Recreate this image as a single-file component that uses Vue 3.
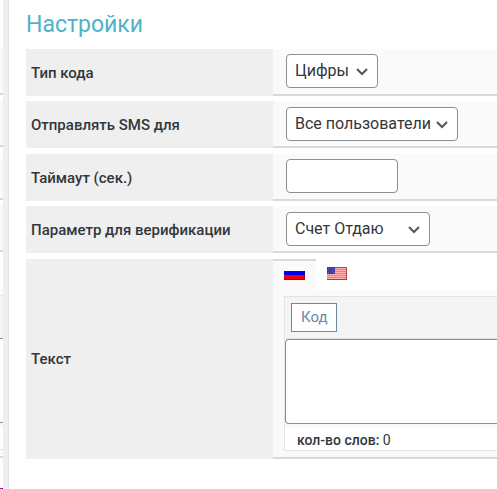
<script setup>
import { ref } from 'vue'

const codeType = ref('digits')
const audience = ref('all')
const timeout = ref('')
const param = ref('give')
const text = ref('')
const stripes = Array.from({ length: 7 }, (_, i) => i)
</script>

<template>
  <div class="page">
    <div class="previous" aria-hidden="true">
      <div v-for="n in 4" :key="n" class="previous-row"></div>
      <div class="previous-editor">
        <div class="previous-toolbar"></div>
        <div class="previous-area"></div>
        <div class="previous-count"></div>
      </div>
      <div class="previous-link"></div>
    </div>

    <main class="panel">
      <h2 class="title">Настройки</h2>
      <form class="rows" @submit.prevent>
        <div class="row">
          <label class="label" for="code-type">Тип кода</label>
          <div class="field">
            <div class="select-wrap short">
              <select id="code-type" v-model="codeType" class="control">
                <option value="digits">Цифры</option>
              </select>
              <svg class="chevron" viewBox="0 0 14 10"><path d="M2 2l5 5 5-5" /></svg>
            </div>
          </div>
        </div>
        <div class="row">
          <label class="label" for="audience">Отправлять SMS для</label>
          <div class="field">
            <div class="select-wrap long">
              <select id="audience" v-model="audience" class="control">
                <option value="all">Все пользователи</option>
              </select>
              <svg class="chevron" viewBox="0 0 14 10"><path d="M2 2l5 5 5-5" /></svg>
            </div>
          </div>
        </div>
        <div class="row">
          <label class="label" for="timeout">Таймаут (сек.)</label>
          <div class="field">
            <input id="timeout" v-model="timeout" class="control number" type="text" />
          </div>
        </div>
        <div class="row">
          <label class="label" for="param">Параметр для верификации</label>
          <div class="field">
            <div class="select-wrap medium">
              <select id="param" v-model="param" class="control">
                <option value="give">Счет Отдаю</option>
              </select>
              <svg class="chevron" viewBox="0 0 14 10"><path d="M2 2l5 5 5-5" /></svg>
            </div>
          </div>
        </div>
        <div class="row text-row">
          <label class="label" for="text">Текст</label>
          <div class="text-field">
            <div class="tabs">
              <button type="button" class="tab active" aria-label="Русский">
                <svg class="flag" width="21" height="13" viewBox="0 0 21 13" shape-rendering="crispEdges">
                  <rect width="21" height="4" fill="#fcfcfc" />
                  <rect y="4" width="21" height="4" fill="#0000f5" />
                  <rect y="8" width="21" height="5" fill="#f00000" />
                  <rect y="12" width="21" height="1" fill="#c40000" />
                  <rect x="20" y="4" width="1" height="4" fill="#0000bd" />
                  <rect x="20" y="8" width="1" height="5" fill="#b80000" />
                </svg>
              </button>
              <button type="button" class="tab" aria-label="English">
                <svg class="flag" width="20" height="13" viewBox="0 0 20 13" shape-rendering="crispEdges">
                  <rect width="20" height="13" fill="#ffb0b0" />
                  <rect v-for="i in stripes" :key="i" :y="i * 2" width="20" height="1" :fill="i === 0 || i === 6 ? '#d83238' : '#f57a7e'" />
                  <rect x="19" width="1" height="13" fill="#b8444a" />
                  <rect y="12" width="20" height="1" fill="#b83238" />
                  <rect width="8" height="7" fill="#3b3b9b" />
                  <path d="M1 1h1v1h-1zM4 1h1v1h-1zM6 2h1v1h-1zM2 3h1v1h-1zM5 4h1v1h-1zM1 5h1v1h-1zM6 5h1v1h-1z" fill="#6868b5" />
                </svg>
              </button>
            </div>
            <div class="editor-pad">
              <div class="editor">
                <div class="toolbar"><button type="button" class="code">Код</button></div>
                <textarea id="text" v-model="text" class="area"></textarea>
                <div class="count"><strong>кол-во слов:</strong> 0</div>
              </div>
            </div>
          </div>
        </div>
      </form>
    </main>
  </div>
</template>

<style>
body {
  margin: 0;
  background: #fff;
}
</style>

<style scoped>
.page {
  display: flex;
  min-height: 100vh;
  overflow: hidden;
  font-family: Roboto, "Liberation Sans", sans-serif;
  color: #32373c;
}
.page * {
  box-sizing: border-box;
}
.previous {
  flex: none;
  width: 3px;
  padding-top: 48px;
}
.previous-row {
  height: 47px;
  margin-bottom: 5px;
  background: #fafafa;
  border-bottom: 2px solid #d9d9d9;
}
.previous-row:nth-child(even) {
  margin-bottom: 6px;
}
.previous-editor {
  margin-top: 37px;
  padding-top: 6px;
  background: #fafafa;
  border-bottom: 2px solid #d9d9d9;
}
.previous-toolbar {
  height: 43px;
  background: #f4f4f4;
  border-top: 1px solid #e5e5e5;
}
.previous-area {
  height: 85px;
  background: #fff;
  border: solid #8c8f94;
  border-width: 1px 0;
}
.previous-count {
  height: 27px;
  margin-bottom: 6px;
  background: #fff;
  border-top: 4px solid #fafafa;
  border-bottom: 1px solid #e5e5e5;
}
.previous-link {
  height: 1px;
  margin-top: 30px;
  background: linear-gradient(90deg, #f00 1px, #0a0 1px 2px, #00f 2px);
}
.panel {
  flex: 1;
  min-width: 0;
  padding: 9px 0 0 17px;
  border-left: 5px solid #efefef;
  box-shadow: inset 1px 0 #e0e0e0;
  padding-left: 18px;
}
.title {
  margin: 0 0 8px;
  font-size: 23px;
  line-height: 32px;
  font-weight: 400;
  color: #50b1c9;
}
.row {
  display: grid;
  grid-template-columns: 247px minmax(0, 1fr);
  min-height: 47px;
  margin-bottom: 5px;
}
.row:nth-child(even) {
  margin-bottom: 6px;
}
.label {
  display: flex;
  align-items: center;
  padding: 0 5px;
  background: #efefef;
  font-size: 15px;
  line-height: 20px;
  font-weight: 500;
}
.field {
  padding: 5px 13px 6px;
  background: #fafafa;
  border-bottom: 2px solid #d9d9d9;
}
.row:nth-child(even) .field {
  padding: 6px 13px 5px;
}
.select-wrap {
  position: relative;
}
.short {
  width: 92px;
}
.long {
  width: 172px;
}
.medium {
  width: 144px;
}
.control {
  display: block;
  width: 100%;
  height: 34px;
  margin: 0;
  padding: 0 24px 0 8px;
  appearance: none;
  border: 1px solid #8c8f94;
  border-radius: 4px;
  background: #fff;
  font: 400 16px/32px Roboto, "Liberation Sans", sans-serif;
  color: #32373c;
}
.number {
  width: 112px;
  padding: 0 8px;
}
.chevron {
  position: absolute;
  top: 13px;
  right: 9px;
  width: 14px;
  height: 10px;
  fill: none;
  stroke: #555;
  stroke-width: 2;
  pointer-events: none;
}
.text-field {
  border-bottom: 2px solid #d9d9d9;
  background: #fafafa;
}
.tabs {
  display: flex;
  background: #fff;
}
.tab {
  display: flex;
  width: 43px;
  height: 31px;
  margin: 0;
  padding: 6px 11px 0;
  border: 0;
  border-top: 2px solid #fff;
  background: #fff;
}
.tab.active {
  border-top-color: #d9d9d9;
  background: #fafafa;
}
.flag {
  flex: none;
}
.editor-pad {
  padding: 6px 0 6px 11px;
}
.editor {
  border: 1px solid #e5e5e5;
  border-right: 0;
  background: #fff;
}
.toolbar {
  height: 42px;
  padding: 6px;
  border-bottom: 1px solid #dedede;
  background: #f4f4f4;
}
.code {
  display: block;
  height: 29px;
  margin: 0;
  padding: 0 8px 0 9px;
  border: 1px solid #7186a3;
  background: #fff;
  font: 400 15px/27px Roboto, "Liberation Sans", sans-serif;
  color: #7186a3;
}
.area {
  display: block;
  width: 100%;
  height: 85px;
  margin: 0;
  padding: 8px;
  border: 1px solid #8c8f94;
  border-right: 0;
  border-radius: 4px 0 0 4px;
  resize: none;
  background: #fff;
  font: 400 16px/24px Roboto, "Liberation Sans", sans-serif;
  color: #32373c;
}
.count {
  padding: 4px 12px 2px;
  border-top: 4px solid #fafafa;
  font-size: 14px;
  line-height: 16px;
}
.count strong {
  font-weight: 500;
}
</style>
